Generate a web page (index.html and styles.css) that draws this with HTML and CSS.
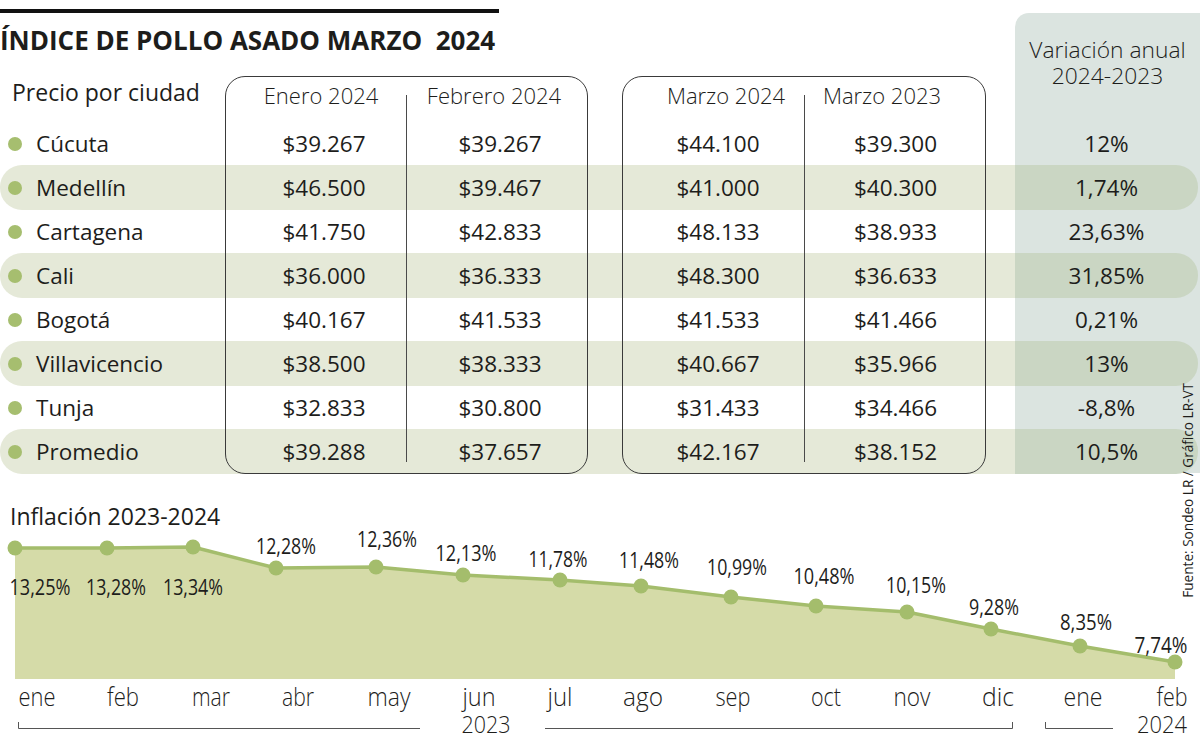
FILE: index.html
```html
<!DOCTYPE html>
<html lang="es">
<head>
<meta charset="utf-8">
<title>Índice de pollo asado marzo 2024</title>
<link rel="stylesheet" href="styles.css">
</head>
<body>
<div class="rule"></div>
<div class="board">
  <div class="layer layer-bg"><div class="var-bg"></div></div>
  <div class="layer layer-data">
    <div class="head">
      <h1 class="title">ÍNDICE DE POLLO ASADO MARZO&nbsp; 2024</h1>
      <div class="var-head"><span class="vh-line">Variación anual</span><span class="vh-line">2024-2023</span></div>
      <div class="h-city">Precio por ciudad</div>
      <div class="h h1">Enero 2024</div>
      <div class="h h2">Febrero 2024</div>
      <div class="h h3">Marzo 2024</div>
      <div class="h h4">Marzo 2023</div>
    </div>
    <div class="row"><div class="city"><span class="dot"></span>Cúcuta</div><div class="v c1">$39.267</div><div class="v c2">$39.267</div><div class="gap"></div><div class="v c3">$44.100</div><div class="v c4">$39.300</div><div class="gap"></div><div class="pct">12%</div></div>
    <div class="row shade"><div class="city"><span class="dot"></span>Medellín</div><div class="v c1">$46.500</div><div class="v c2">$39.467</div><div class="gap"></div><div class="v c3">$41.000</div><div class="v c4">$40.300</div><div class="gap"></div><div class="pct">1,74%</div></div>
    <div class="row"><div class="city"><span class="dot"></span>Cartagena</div><div class="v c1">$41.750</div><div class="v c2">$42.833</div><div class="gap"></div><div class="v c3">$48.133</div><div class="v c4">$38.933</div><div class="gap"></div><div class="pct">23,63%</div></div>
    <div class="row shade"><div class="city"><span class="dot"></span>Cali</div><div class="v c1">$36.000</div><div class="v c2">$36.333</div><div class="gap"></div><div class="v c3">$48.300</div><div class="v c4">$36.633</div><div class="gap"></div><div class="pct">31,85%</div></div>
    <div class="row"><div class="city"><span class="dot"></span>Bogotá</div><div class="v c1">$40.167</div><div class="v c2">$41.533</div><div class="gap"></div><div class="v c3">$41.533</div><div class="v c4">$41.466</div><div class="gap"></div><div class="pct">0,21%</div></div>
    <div class="row shade"><div class="city"><span class="dot"></span>Villavicencio</div><div class="v c1">$38.500</div><div class="v c2">$38.333</div><div class="gap"></div><div class="v c3">$40.667</div><div class="v c4">$35.966</div><div class="gap"></div><div class="pct">13%</div></div>
    <div class="row"><div class="city"><span class="dot"></span>Tunja</div><div class="v c1">$32.833</div><div class="v c2">$30.800</div><div class="gap"></div><div class="v c3">$31.433</div><div class="v c4">$34.466</div><div class="gap"></div><div class="pct">-8,8%</div></div>
    <div class="row shade"><div class="city"><span class="dot"></span>Promedio</div><div class="v c1">$39.288</div><div class="v c2">$37.657</div><div class="gap"></div><div class="v c3">$42.167</div><div class="v c4">$38.152</div><div class="gap"></div><div class="pct">10,5%</div></div>
  </div>
  <div class="layer layer-frames">
    <div class="box box1"><div class="half"></div></div>
    <div class="box box2"><div class="half"></div></div>
  </div>
</div>

<h2 class="chart-title">Inflación 2023-2024</h2>
<svg class="chart" viewBox="0 522 1200 214" width="1200" height="214" xmlns="http://www.w3.org/2000/svg">
  <polygon class="area" points="15,679 15,548 107,548 193,547 276,568 376,567 463,575 560,580 641,586 731,597 816,606 907,612 991,629 1080,646 1175,662 1175,679"/>
  <polyline class="line" points="15,548 107,548 193,547 276,568 376,567 463,575 560,580 641,586 731,597 816,606 907,612 991,629 1080,646 1175,662"/>
  <g class="dots">
    <circle cx="15" cy="548" r="7.5"/><circle cx="107" cy="548" r="7.5"/><circle cx="193" cy="547" r="7.5"/>
    <circle cx="276" cy="568" r="7.5"/><circle cx="376" cy="567" r="7.5"/><circle cx="463" cy="575" r="7.5"/>
    <circle cx="560" cy="580" r="7.5"/><circle cx="641" cy="586" r="7.5"/><circle cx="731" cy="597" r="7.5"/>
    <circle cx="816" cy="606" r="7.5"/><circle cx="907" cy="612" r="7.5"/><circle cx="991" cy="629" r="7.5"/>
    <circle cx="1080" cy="646" r="7.5"/><circle cx="1175" cy="662" r="7.5"/>
  </g>
  <g class="vals">
    <text x="40" y="595" textLength="61" lengthAdjust="spacingAndGlyphs">13,25%</text>
    <text x="116" y="595" textLength="60" lengthAdjust="spacingAndGlyphs">13,28%</text>
    <text x="193" y="595" textLength="60" lengthAdjust="spacingAndGlyphs">13,34%</text>
    <text x="286" y="554" textLength="60" lengthAdjust="spacingAndGlyphs">12,28%</text>
    <text x="387" y="547" textLength="60" lengthAdjust="spacingAndGlyphs">12,36%</text>
    <text x="466" y="561" textLength="61" lengthAdjust="spacingAndGlyphs">12,13%</text>
    <text x="558" y="567" textLength="59" lengthAdjust="spacingAndGlyphs">11,78%</text>
    <text x="649" y="568" textLength="60" lengthAdjust="spacingAndGlyphs">11,48%</text>
    <text x="737" y="575" textLength="60" lengthAdjust="spacingAndGlyphs">10,99%</text>
    <text x="824" y="584" textLength="61" lengthAdjust="spacingAndGlyphs">10,48%</text>
    <text x="916" y="593" textLength="60" lengthAdjust="spacingAndGlyphs">10,15%</text>
    <text x="994" y="615" textLength="50" lengthAdjust="spacingAndGlyphs">9,28%</text>
    <text x="1086" y="630" textLength="52" lengthAdjust="spacingAndGlyphs">8,35%</text>
    <text x="1161" y="653" textLength="53" lengthAdjust="spacingAndGlyphs">7,74%</text>
  </g>
  <g class="months">
    <text x="37" y="706" textLength="37" lengthAdjust="spacingAndGlyphs">ene</text>
    <text x="123" y="706" textLength="32" lengthAdjust="spacingAndGlyphs">feb</text>
    <text x="211" y="706" textLength="38" lengthAdjust="spacingAndGlyphs">mar</text>
    <text x="298" y="706" textLength="32" lengthAdjust="spacingAndGlyphs">abr</text>
    <text x="389" y="706" textLength="43" lengthAdjust="spacingAndGlyphs">may</text>
    <text x="479" y="706" textLength="33" lengthAdjust="spacingAndGlyphs">jun</text>
    <text x="560" y="706" textLength="25" lengthAdjust="spacingAndGlyphs">jul</text>
    <text x="643" y="706" textLength="40" lengthAdjust="spacingAndGlyphs">ago</text>
    <text x="733" y="706" textLength="35" lengthAdjust="spacingAndGlyphs">sep</text>
    <text x="826" y="706" textLength="30" lengthAdjust="spacingAndGlyphs">oct</text>
    <text x="912" y="706" textLength="37" lengthAdjust="spacingAndGlyphs">nov</text>
    <text x="998" y="706" textLength="32" lengthAdjust="spacingAndGlyphs">dic</text>
    <text x="1083" y="706" textLength="39" lengthAdjust="spacingAndGlyphs">ene</text>
    <text x="1172" y="706" textLength="31" lengthAdjust="spacingAndGlyphs">feb</text>
    <text class="yr" x="486" y="733" textLength="49" lengthAdjust="spacingAndGlyphs">2023</text>
    <text class="yr" x="1162" y="733" textLength="50" lengthAdjust="spacingAndGlyphs">2024</text>
  </g>
  <g class="brackets">
    <path d="M18.5 722 V728.5 H420"/>
    <path d="M545 728.5 H1012.5 V722"/>
    <path d="M1045.5 722 V728.5 H1113"/>
  </g>
</svg>

<div class="source">Fuente: Sondeo LR / Gráfico LR-VT</div>
</body>
</html>
```
FILE: styles.css
```css
html, body {
  margin: 0;
  padding: 0;
}
body {
  width: 1200px;
  height: 736px;
  overflow: hidden;
  position: relative;
  background: #ffffff;
  color: #1d1d1b;
  font-family: "Open Sans", "Noto Sans", "DejaVu Sans", sans-serif;
}

.rule {
  width: 499px;
  height: 4px;
  margin-top: 9px;
  background: #111111;
}

/* ---------- table board: stacked layers sharing one cell ---------- */
.board {
  display: grid;
  height: 461px;
}
.layer {
  grid-area: 1 / 1;
  display: grid;
  grid-template-columns: 225px 182px 181px 34px 183px 181px 29px 185px;
}
.layer-bg {
  z-index: 0;
}
.var-bg {
  grid-column: 8;
  height: 460px;
  background: #dbe4e0;
  border-radius: 14px 0 0 14px;
}
.layer-data {
  z-index: 1;
  display: flex;
  flex-direction: column;
}
.layer-frames {
  z-index: 2;
  grid-template-rows: 63px 398px;
  pointer-events: none;
}

/* header */
.head {
  display: grid;
  grid-template-columns: 225px 182px 181px 34px 183px 181px 29px 185px;
  grid-template-rows: 63px 45px;
}
.title {
  grid-column: 1 / 8;
  grid-row: 1;
  margin: 11px 0 0 0;
  font-size: 26px;
  line-height: 32px;
  font-weight: 700;
  font-stretch: 91%;
  white-space: pre;
  letter-spacing: 0;
}
.var-head {
  grid-column: 8;
  grid-row: 1 / 3;
  padding-top: 24px;
  display: flex;
  flex-direction: column;
  align-items: center;
  font-size: 22.8px;
  line-height: 26px;
  font-weight: 300;
}
.vh-line {
  display: block;
  height: 26px;
  white-space: nowrap;
}
.h-city {
  grid-column: 1;
  grid-row: 2;
  padding: 1px 0 0 12px;
  font-size: 23px;
  line-height: 30px;
}
.h {
  grid-row: 2;
  padding-top: 4px;
  font-size: 22px;
  line-height: 30px;
  font-weight: 300;
  text-align: center;
  white-space: nowrap;
}
.h1 { grid-column: 2; padding-left: 10px; }
.h2 { grid-column: 3; padding-right: 7px; }
.h3 { grid-column: 5; padding-left: 25px; }
.h4 { grid-column: 6; padding-right: 27px; }

/* rows */
.row {
  display: grid;
  grid-template-columns: 225px 182px 181px 34px 183px 181px 29px 185px;
  height: 44px;
  font-size: 22.5px;
  line-height: 44px;
}
.row > div {
  padding-top: 1px;
  white-space: nowrap;
}
.city {
  display: flex;
  align-items: center;
  gap: 14px;
  padding-left: 8px;
}
.dot {
  width: 14px;
  height: 14px;
  border-radius: 50%;
  background: #a6be6f;
  flex: none;
  margin-top: -1px;
}
.v, .pct {
  text-align: center;
}
.c1 { padding-left: 16px; }
.c2 { padding-left: 5px; }
.c3 { padding-left: 9px; }
.pct { margin-right: 2px; }

.row.shade > div {
  background: #e5e9d8;
}
.row.shade > .city {
  border-radius: 22px 0 0 22px;
}
.row.shade > .pct {
  background: #cad6c3;
  border-radius: 0 22px 22px 0;
}

/* frames */
.box {
  grid-row: 2;
  border: 1px solid #3a3a3a;
  border-radius: 20px;
  display: grid;
  grid-template-columns: 181px 1fr;
}
.box1 { grid-column: 2 / 4; }
.box2 { grid-column: 5 / 7; grid-template-columns: 182px 1fr; }
.half {
  border-right: 1px solid #4a4a4a;
  margin: 18px 0 11px 0;
}

/* ---------- chart ---------- */
.chart-title {
  margin: 36px 0 0 10px;
  font-size: 23px;
  line-height: 12px;
  font-weight: 400;
}
.chart {
  display: block;
}
.area {
  fill: #d5dba8;
}
.line {
  fill: none;
  stroke: #a4bd6c;
  stroke-width: 3.5;
  stroke-linejoin: round;
}
.dots circle {
  fill: #a4bd6c;
}
.vals text {
  font-family: "Open Sans", "Noto Sans", sans-serif;
  font-size: 22px;
  fill: #1d1d1b;
  text-anchor: middle;
}
.months text {
  font-family: "Open Sans", "Noto Sans", sans-serif;
  font-size: 25px;
  font-weight: 300;
  fill: #1d1d1b;
  text-anchor: middle;
}
.months .yr {
  font-size: 24px;
}
.brackets path {
  fill: none;
  stroke: #555555;
  stroke-width: 1;
}

.source {
  position: absolute;
  z-index: 3;
  left: 1180px;
  top: 383px;
  writing-mode: vertical-rl;
  transform: rotate(180deg);
  font-size: 13.6px;
  line-height: 16px;
  font-stretch: 88%;
  letter-spacing: 0;
  white-space: nowrap;
  font-weight: 400;
}
```
